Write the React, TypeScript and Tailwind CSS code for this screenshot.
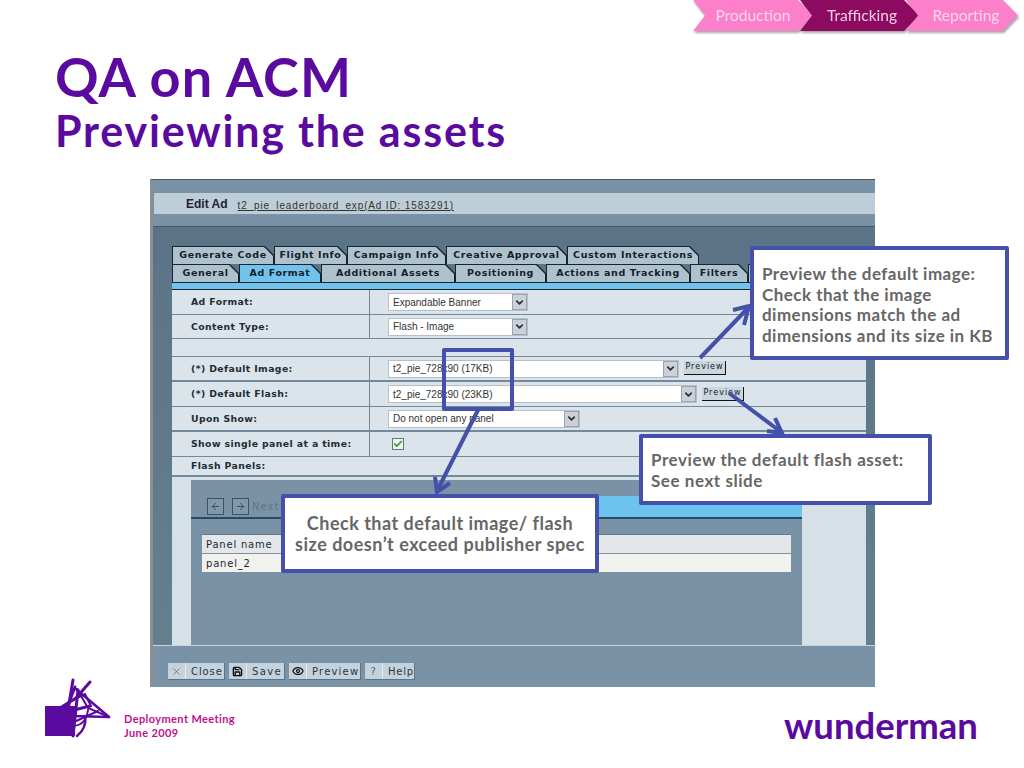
import React from 'react';
import { ArrowLeft, ArrowRight, ChevronDown, Check, Eye, Save, X } from 'lucide-react';

const verdana = "font-['DejaVu_Sans',sans-serif]";
const arial = "font-['Liberation_Sans',sans-serif]";

const topTabs = [
  { label: 'Generate Code', w: 'w-[102px]' },
  { label: 'Flight Info', w: 'w-[73px]' },
  { label: 'Campaign Info', w: 'w-[99px]' },
  { label: 'Creative Approval', w: 'w-[121px]' },
  { label: 'Custom Interactions', w: 'w-[132px]' },
];

const bottomTabs = [
  { label: 'General', w: 'w-[67px]' },
  { label: 'Ad Format', w: 'w-[82px]', active: true },
  { label: 'Additional Assets', w: 'w-[134px]' },
  { label: 'Positioning', w: 'w-[91px]' },
  { label: 'Actions and Tracking', w: 'w-[144px]' },
  { label: 'Filters', w: 'w-[58px]' },
  { label: '', w: 'w-[40px]' },
];

const Tab = ({ label, w, active }: { label: string; w: string; active?: boolean }) => (
  <div className={`${w} h-[18px] bg-[#16242f] [clip-path:polygon(0_0,calc(100%-9px)_0,100%_9px,100%_100%,0_100%)] pt-px pr-px pl-px`}>
    <div
      className={`h-full flex items-center justify-center whitespace-nowrap text-[9.5px] font-bold tracking-[0.6px] text-[#14202a] ${verdana} [clip-path:polygon(0_0,calc(100%-9px)_0,100%_9px,100%_100%,0_100%)] ${
        active ? 'bg-[#72c3ec]' : 'bg-[#aec2ce]'
      }`}
    >
      {label}
    </div>
  </div>
);

const Select = ({ text, w }: { text: string; w: string }) => (
  <div className={`${w} h-[18px] bg-white border border-[#b4c0ca] flex items-center justify-between pl-[4px] ${arial} text-[10px] text-[#333]`}>
    <span className="whitespace-nowrap">{text}</span>
    <span className="w-[15px] h-[16px] bg-[#ccd0d8] border border-[#9aa4ae] flex items-center justify-center shrink-0">
      <ChevronDown size={11} strokeWidth={4} className="text-[#333]" />
    </span>
  </div>
);

const PreviewBtn = ({ offset }: { offset: string }) => (
  <div className={`ml-[5px] w-[42px] h-[14px] ${offset} bg-[#c9d6de] border-r border-b border-[#111] flex items-center justify-center text-[8px] tracking-[1px] text-[#14202a] ${verdana}`}>
    Preview
  </div>
);

const FormRow = ({ label, h, children, thick }: { label: string; h: string; children: React.ReactNode; thick?: boolean }) => (
  <div className={`${h} flex border-b ${thick ? 'border-b-2' : ''} border-[#71899a] bg-[#dae4ea]`}>
    <div className={`w-[198px] shrink-0 pl-[19px] flex items-center whitespace-nowrap border-r border-[#71899a] text-[9.3px] font-bold tracking-[0.4px] text-[#222c34] ${verdana}`}>
      {label}
    </div>
    <div className="flex-1 pl-[18px] flex items-center">{children}</div>
  </div>
);

const FooterBtn = ({ icon, label, w, spacing }: { icon: React.ReactNode; label: string; w: string; spacing: string }) => (
  <div className={`${w} h-[17px] bg-[#c3d2dc] border-b border-r border-[#5d7486] flex items-center text-[10px] ${spacing} text-[#2b3640] ${verdana}`}>
    <span className="w-[18px] flex items-center justify-center border-r border-[#e4ecf0] h-full shrink-0">{icon}</span>
    <span className="pl-[5px] whitespace-nowrap">{label}</span>
  </div>
);

const Chevron = ({ label, bg, text, w, pad }: { label: string; bg: string; text: string; w: string; pad: string }) => (
  <div className={`${w} ${pad} h-[31px] ${bg} ${text} flex items-center justify-center text-[15.5px] font-['Lato',sans-serif] [clip-path:polygon(0_0,calc(100%-15px)_0,100%_50%,calc(100%-15px)_100%,0_100%,12px_50%)]`}>
    {label}
  </div>
);

const Callout = ({ className, children }: { className: string; children: React.ReactNode }) => (
  <div className={`absolute bg-white border-[4px] border-[#4450aa] rounded-[2px] font-['Lato',sans-serif] font-bold text-[#666] leading-[20.5px] whitespace-nowrap ${className}`}>
    {children}
  </div>
);

const Logo = () => (
  <svg width="70" height="60" viewBox="45 680 70 60" className="shrink-0">
    <rect x="45" y="708" width="30" height="30" fill="#5a0a9e" />
    <g stroke="#5a0a9e" fill="none" strokeLinecap="round">
      <path d="M73 682 L68 712" strokeWidth="3" />
      <path d="M90 684 L76 700 L60 710" strokeWidth="3" />
      <path d="M75 689 L66 712" strokeWidth="3" />
      <path d="M76 691 L109 719" strokeWidth="2.5" />
      <path d="M77 691 L88 710 L109 719" strokeWidth="2" />
      <path d="M78 692 L73 738" strokeWidth="3" />
      <path d="M74 712 L90 708" strokeWidth="3" />
      <path d="M72 718 L109 719" strokeWidth="2.5" />
      <path d="M74 724 L98 713" strokeWidth="2" />
      <path d="M72 728 Q86 728 88 712" strokeWidth="2" />
      <path d="M77 738 Q87 730 85 718" strokeWidth="2.5" />
      <path d="M73 702 L85 696 L91 708" strokeWidth="2" />
    </g>
  </svg>
);

export default function App() {
  return (
    <div className="relative w-[1024px] h-[768px] overflow-hidden bg-white">
      {/* breadcrumb chevrons */}
      <div className="flex justify-end pr-[6px] [filter:drop-shadow(1px_2px_1px_rgba(0,0,0,0.35))]">
        <Chevron label="Production" bg="bg-[#fb80c9]" text="text-[#fcd7ee]" w="w-[120px]" pad="pl-0" />
        <Chevron label="Trafficking" bg="bg-[#8c0b60]" text="text-[#f4cfe4]" w="w-[119px] -ml-[13px]" pad="pl-[5px]" />
        <Chevron label="Reporting" bg="bg-[#fb80c9]" text="text-[#fcd7ee]" w="w-[112px] -ml-[13px]" pad="pl-[8px]" />
      </div>

      {/* title */}
      <div className="pl-[55px] pt-[13px] h-[148px] font-['Lato',sans-serif] font-bold text-[#5a0a9e]">
        <h1 className="text-[54px] leading-[66px] tracking-[1.1px]">QA on ACM</h1>
        <h2 className="text-[43px] leading-[42px] tracking-[1.8px]">Previewing the assets</h2>
      </div>

      {/* screenshot of the ad tool */}
      <div className="ml-[150px] w-[725px] h-[508px] bg-[#7a92a6] border-l-[3px] border-l-[#8b8f93] border-t border-t-[#555] flex flex-col">
        <div className="h-[47px] pt-[13px] border-b border-[#44586a]">
          <div className="h-[21px] ml-[1px] bg-[#bdced8] flex items-center pl-[32px]">
            <span className={`${arial} font-bold text-[12px] text-[#223] mr-[10px]`}>Edit Ad</span>
            <span className={`${arial} text-[10px] tracking-[0.85px] underline text-[#333] mt-[3px]`}>t2_pie_leaderboard_exp(Ad ID: 1583291)</span>
          </div>
        </div>

        <div className="flex-1 flex flex-col pl-[19px] pr-[9px] bg-gradient-to-b from-[#5b7386] to-[#64808f]">
          <div className="pt-[19px]">
            <div className="flex">
              {topTabs.map((t) => (
                <Tab key={t.label} {...t} />
              ))}
            </div>
            <div className="flex">
              {bottomTabs.map((t) => (
                <Tab key={t.label} {...t} />
              ))}
            </div>
            <div className="h-[8px] bg-[#72c3ec] border-t border-t-[#16242f] border-b border-b-[#16242f]" />
          </div>

          <FormRow label="Ad Format:" h="h-[25px]">
            <Select text="Expandable Banner" w="w-[140px]" />
          </FormRow>
          <FormRow label="Content Type:" h="h-[24px]">
            <Select text="Flash - Image" w="w-[140px]" />
          </FormRow>
          <div className="h-[18px] bg-[#dae4ea] border-b border-[#71899a]" />
          <FormRow label="(*) Default Image:" h="h-[25px]" thick>
            <Select text="t2_pie_728x90 (17KB)" w="w-[291px]" />
            <PreviewBtn offset="-mt-[2px]" />
          </FormRow>
          <FormRow label="(*) Default Flash:" h="h-[25px]">
            <Select text="t2_pie_728x90 (23KB)" w="w-[309px]" />
            <PreviewBtn offset="-mt-px" />
          </FormRow>
          <FormRow label="Upon Show:" h="h-[25px]" thick>
            <Select text="Do not open any panel" w="w-[192px]" />
          </FormRow>
          <FormRow label="Show single panel at a time:" h="h-[25px]">
            <span className="ml-[4px] w-[12px] h-[12px] bg-[#eef3ee] border border-[#5d7a6a] flex items-center justify-center">
              <Check size={10} strokeWidth={4} className="text-[#2f9a3c]" />
            </span>
          </FormRow>
          <div className={`h-[20px] bg-[#dae4ea] border-b-2 border-[#71899a] pl-[19px] flex items-center text-[9.3px] font-bold tracking-[0.4px] text-[#222c34] ${verdana}`}>
            Flash Panels:
          </div>

          {/* nested panels area */}
          <div className="flex-1 bg-[#d6e1e7] pl-[19px] pr-[64px] pt-[3px] flex">
            <div className="flex-1 bg-[#7a92a6] flex flex-col">
              <div className="h-[39px] flex items-end border-b-2 border-[#234b66]">
                <div className="flex-1 flex items-center gap-[8px] pl-[16px] pb-[2px]">
                  <span className="w-[17px] h-[17px] border border-[#3d5264] bg-[#8298aa] flex items-center justify-center">
                    <ArrowLeft size={11} className="text-[#33485a]" />
                  </span>
                  <span className="w-[17px] h-[17px] border border-[#3d5264] bg-[#8298aa] flex items-center justify-center">
                    <ArrowRight size={11} className="text-[#33485a]" />
                  </span>
                  <span className={`${verdana} text-[10px] tracking-[1px] text-[#5f7586] -ml-[5px]`}>Next</span>
                </div>
                <div className="w-[203px] h-[21px] bg-[#6cc4ee]" />
              </div>
              <div className={`mt-[15px] mx-[11px] ${verdana} text-[10px] tracking-[0.8px] text-[#1d2730]`}>
                <div className="h-[19px] bg-[#e4e7e9] border-t border-[#66798a] pl-[4px] flex items-center">Panel name</div>
                <div className="h-[19px] bg-[#f1f1ee] border-t border-[#7f909e] pl-[4px] flex items-center">panel_2</div>
              </div>
            </div>
          </div>
        </div>

        {/* bottom toolbar */}
        <div className="h-[42px] border-t border-[#c6d5de] flex gap-[4px] pl-[15px] pt-[17px]">
          <FooterBtn label="Close" w="w-[57px]" spacing="tracking-[0.9px]" icon={<X size={11} strokeWidth={1.5} className="text-[#53616c]" />} />
          <FooterBtn label="Save" w="w-[56px]" spacing="tracking-[1.4px]" icon={<Save size={11} strokeWidth={3} className="text-[#111]" />} />
          <FooterBtn label="Preview" w="w-[72px]" spacing="tracking-[1.2px]" icon={<Eye size={12} strokeWidth={2.5} className="text-[#111]" />} />
          <FooterBtn label="Help" w="w-[50px]" spacing="tracking-[0.8px]" icon={<span className="text-[#53616c]">?</span>} />
        </div>
      </div>

      {/* footer */}
      <div className="absolute left-[45px] bottom-[30px] flex items-end gap-[9px]">
        <Logo />
        <div className="-mb-px font-['Lato',sans-serif] font-bold text-[11px] tracking-[0.4px] leading-[13.5px] text-[#c0118c]">
          <div>Deployment Meeting</div>
          <div>June 2009</div>
        </div>
      </div>
      <div className="absolute left-[784px] top-[703px] font-['Lato',sans-serif] font-bold text-[36.5px] leading-[44px] text-[#5a0a9e]">
        wunderman
      </div>

      {/* highlight box over the size values */}
      <div className="absolute left-[442px] top-[348px] w-[72px] h-[63px] border-[4px] border-[#4450aa] rounded-[2px]" />

      {/* arrows */}
      <svg className="absolute inset-0 pointer-events-none" width="1024" height="768" fill="none" stroke="#4450aa" strokeWidth="4">
        <path d="M700 358 L748 308 M733 310 L749 306 L744 325" />
        <path d="M729 393 L781 432 M775 418 L782 433 L767 431" />
        <path d="M478 410 L437 491 M435 477 L437 492 L450 483" />
      </svg>

      <Callout className="left-[750px] top-[246px] w-[259px] h-[114px] pl-[8px] pt-[14px] text-[17px] tracking-[0.47px]">
        Preview the default image:
        <br />
        Check that the image
        <br />
        dimensions match the ad
        <br />
        dimensions and its size in KB
      </Callout>
      <Callout className="left-[639px] top-[434px] w-[293px] h-[71px] pl-[8px] pt-[12px] text-[17px] tracking-[0.55px]">
        Preview the default flash asset:
        <br />
        See next slide
      </Callout>
      <Callout className="left-[281px] top-[494px] w-[318px] h-[79px] pt-[15px] text-center text-[18px] tracking-[0.5px]">
        Check that default image/ flash
        <br />
        size doesn’t exceed publisher spec
      </Callout>
    </div>
  );
}
